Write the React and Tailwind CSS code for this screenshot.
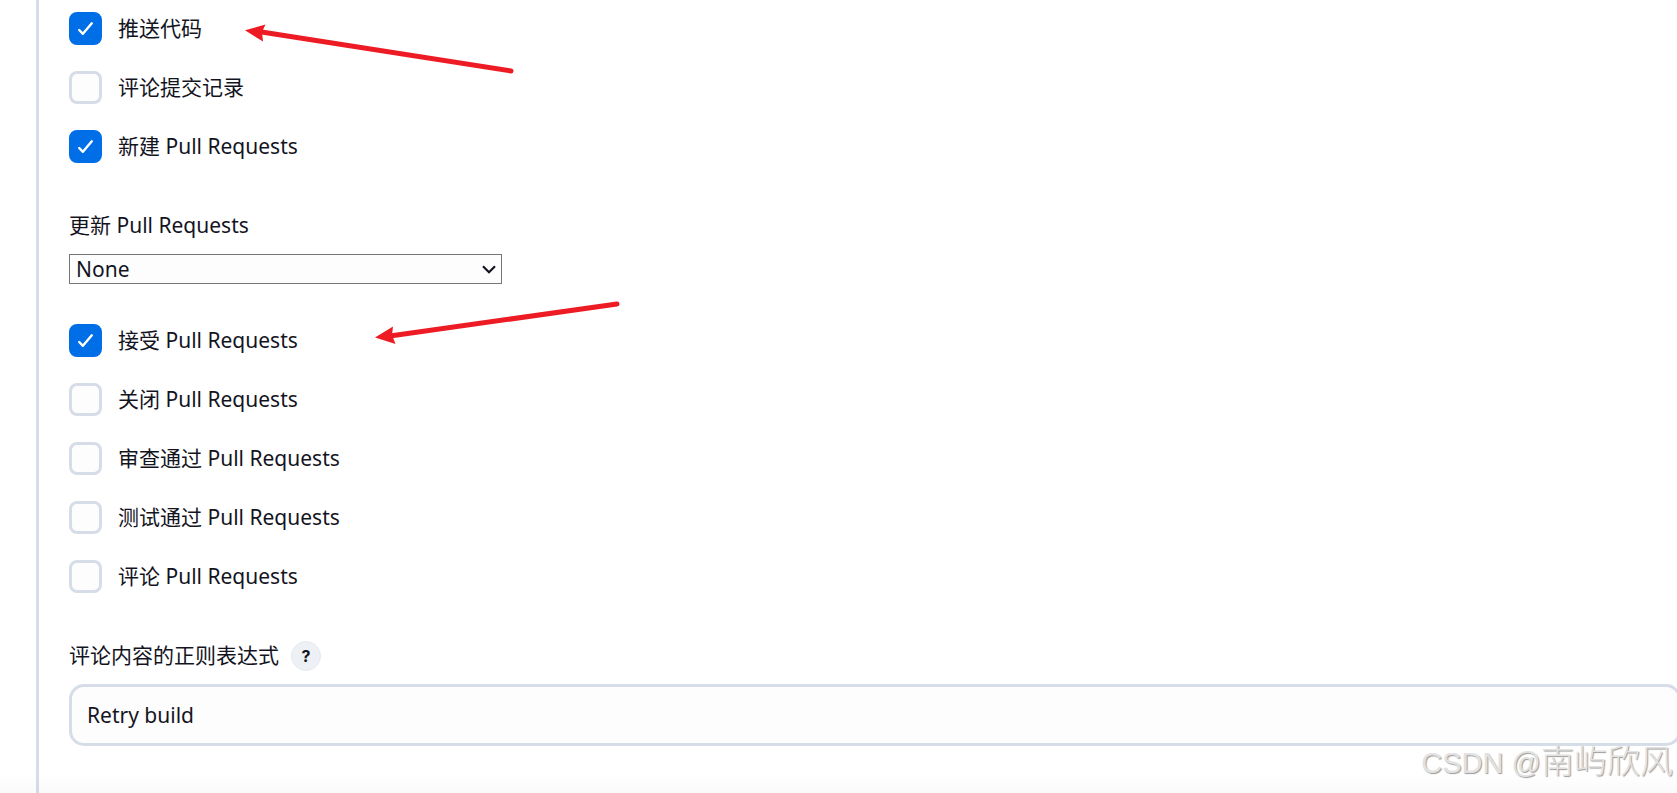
import React, { useState } from 'react';

const pushEvents = [
  { id: 'push', label: '推送代码', checked: true },
  { id: 'commit-comment', label: '评论提交记录', checked: false },
  { id: 'pr-open', label: '新建 Pull Requests', checked: true },
];

const pullRequestEvents = [
  { id: 'pr-accept', label: '接受 Pull Requests', checked: true },
  { id: 'pr-close', label: '关闭 Pull Requests', checked: false },
  { id: 'pr-approve', label: '审查通过 Pull Requests', checked: false },
  { id: 'pr-test', label: '测试通过 Pull Requests', checked: false },
  { id: 'pr-comment', label: '评论 Pull Requests', checked: false },
];

const Checkbox = ({ id, label, checked: initial }) => {
  const [checked, setChecked] = useState(initial);

  return (
    <div className="flex items-center gap-4">
      <div className="grid size-[33px] shrink-0">
        <input
          id={id}
          type="checkbox"
          checked={checked}
          onChange={(e) => setChecked(e.target.checked)}
          className="col-start-1 row-start-1 appearance-none rounded-lg border-3 border-[#d6dde8] bg-[#fdfdfd] checked:border-[#006ee6] checked:bg-[#006ee6]"
        />
        {checked && (
          <svg viewBox="0 0 33 33" className="pointer-events-none col-start-1 row-start-1 size-[33px]" fill="none" stroke="#fff" strokeWidth="2.4" strokeLinecap="round" strokeLinejoin="round">
            <path d="M10.2 18L13.9 21.8L22.8 11.3" />
          </svg>
        )}
      </div>
      <label htmlFor={id} className="pb-0.5">{label}</label>
    </div>
  );
};

const CheckboxGroup = ({ items }) => (
  <div className="flex flex-col gap-[26px]">
    {items.map((item) => (
      <Checkbox key={item.id} {...item} />
    ))}
  </div>
);

const Arrow = ({ className, line, head }) => (
  <svg className={className} fill="#ed1c24" stroke="#ed1c24" aria-hidden="true">
    <path d={line} strokeWidth="5" strokeLinecap="round" />
    <path d={head} stroke="none" />
  </svg>
);

const App = () => {
  return (
    <div className="relative min-h-screen overflow-hidden bg-white pl-9 font-['Noto_Sans','Noto_Sans_CJK_SC',sans-serif] text-[21px] leading-7 text-[#14141f]">
      <div className="min-h-screen border-l-3 border-[#d6dde8] pt-3 pl-[30px]">
        <CheckboxGroup items={pushEvents} />

        <div className="mt-12 mb-10 flex flex-col items-start gap-[15px]">
          <label htmlFor="pr-update">更新 Pull Requests</label>
          <div className="grid w-full max-w-[433px] items-center">
            <select
              id="pr-update"
              defaultValue="none"
              className="col-start-1 row-start-1 h-[30px] appearance-none rounded-none border border-[#767676] bg-[#fdfdfd] pr-7 pb-0.5 pl-1.5 leading-7"
            >
              <option value="none">None</option>
              <option value="source">Source branch updated</option>
              <option value="target">Target branch updated</option>
              <option value="both">Both</option>
            </select>
            <svg viewBox="0 0 14 9" className="pointer-events-none col-start-1 row-start-1 mr-1.5 h-[9px] w-3.5 justify-self-end" fill="none" stroke="currentColor" strokeWidth="2.2">
              <path d="M1 1.2L7 7.2L13 1.2" />
            </svg>
          </div>
        </div>

        <CheckboxGroup items={pullRequestEvents} />

        <div className="mt-12 mb-[13px] flex items-center gap-3">
          <label htmlFor="comment-regex" className="pb-0.5">评论内容的正则表达式</label>
          <button type="button" className="size-[30px] rounded-full border border-[#e6eaef] bg-[#edf1f5] font-['Inter',sans-serif] text-base leading-none font-bold">
            ?
          </button>
        </div>
        <div className="-mr-1">
          <input
            id="comment-regex"
            type="text"
            defaultValue="Retry build"
            className="h-[62px] w-full rounded-[15px] border-3 border-[#d6dde8] bg-[#fdfdfd] px-[15px]"
          />
        </div>
      </div>

      <div className="pointer-events-none absolute inset-x-0 bottom-0 h-5 bg-linear-to-b from-transparent to-black/2" />

      <Arrow
        className="pointer-events-none absolute top-5 left-[240px] h-[60px] w-[280px]"
        line="M20 11.8L271 51"
        head="M5 10.3L25.5 4.5L22 12L23 21.5Z"
      />
      <Arrow
        className="pointer-events-none absolute top-[295px] left-[370px] h-[60px] w-[260px]"
        line="M20 41L247 9"
        head="M5 42.5L23 31.5L22 40L25.5 49Z"
      />

      <p className="pointer-events-none absolute right-1 bottom-2 font-['Liberation_Sans','Noto_Sans_CJK_SC',sans-serif] text-[29px] leading-[44px] font-light text-[#e2e2e2] [text-shadow:1px_1px_1px_#999]">
        CSDN @<span className="text-[33px]">南屿欣风</span>
      </p>
    </div>
  );
};

export default App;
